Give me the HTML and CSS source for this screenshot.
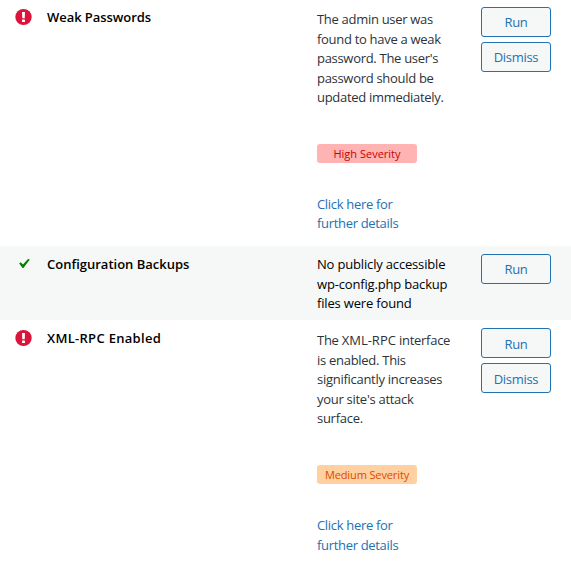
FILE: index.html
```html
<!DOCTYPE html>
<html lang="en">
<head>
<meta charset="utf-8">
<title>Security Checks</title>
<link rel="stylesheet" href="styles.css">
</head>
<body>
<main class="checks">
  <section class="check check-weak">
    <svg class="icon" viewBox="0 0 17 16"><ellipse cx="8.5" cy="8" rx="8.2" ry="8" fill="#dc143c"/><path d="M7 3h3l-.3 6.2H7.3z" fill="#fff"/><rect x="7" y="10.4" width="3" height="2.6" rx=".6" fill="#fff"/></svg>
    <h2 class="title">Weak Passwords</h2>
    <div class="details">
      <p class="text">The admin user was<br>found to have a weak<br>password. The user's<br>password should be<br>updated immediately.</p>
      <div class="badge high">High Severity</div>
      <a class="link">Click here for<br>further details</a>
    </div>
    <div class="actions"><button>Run</button><button>Dismiss</button></div>
  </section>
  <section class="check check-ok">
    <svg class="icon" viewBox="0 0 17 16"><path d="M4.2 8.5 5.7 7.2 8 9.4 13 4 14.8 4.6 8.4 13H7.5z" fill="#008000"/></svg>
    <h2 class="title">Configuration Backups</h2>
    <div class="details">
      <p class="text dark">No publicly accessible<br>wp-config.php backup<br>files were found</p>
    </div>
    <div class="actions"><button>Run</button></div>
  </section>
  <section class="check check-rpc">
    <svg class="icon" viewBox="0 0 17 16"><ellipse cx="8.5" cy="8" rx="8.2" ry="8" fill="#dc143c"/><path d="M7 3h3l-.3 6.2H7.3z" fill="#fff"/><rect x="7" y="10.4" width="3" height="2.6" rx=".6" fill="#fff"/></svg>
    <h2 class="title">XML-RPC Enabled</h2>
    <div class="details">
      <p class="text">The <span class="wide">XML-RPC</span> interface<br>is enabled. This<br>significantly increases<br>your site's attack<br>surface.</p>
      <div class="badge medium">Medium Severity</div>
      <a class="link">Click here for<br>further details</a>
    </div>
    <div class="actions"><button>Run</button><button>Dismiss</button></div>
  </section>
</main>
</body>
</html>
```
FILE: styles.css
```css
body { margin: 0; background: #fff; font-family: "Open Sans", "Noto Sans", sans-serif; font-size: 13px; }
.check { display: grid; grid-template-columns: 32px 270px 164px 70px; padding: 8px 20px 0 15px; box-sizing: border-box; height: 246px; }
.check-ok { height: 74px; background: #f6f7f7; }
.icon { width: 17px; height: 16px; margin-top: 1px; }
.title { margin: 0; font-size: 13px; line-height: 19.5px; font-weight: 600; color: #000; }
.check-weak .title { letter-spacing: -.06px; }
.check-rpc .title { letter-spacing: .3px; }
.check-ok .title, .check-rpc .title { margin-top: 1px; }
.check-rpc .icon { margin-top: 2px; }
.text { margin: 2px 0 0; line-height: 19.5px; letter-spacing: -.3px; color: #2c3338; white-space: nowrap; }
.check-rpc .text { margin-top: 3px; letter-spacing: -.28px; }
.wide { letter-spacing: 0; }
.text.dark { margin-top: 1px; color: #000; letter-spacing: -.17px; }
.badge { width: 100px; height: 19px; margin-top: 36.5px; border-radius: 3px; font-size: 11px; line-height: 20px; text-align: center; white-space: nowrap; }
.high { background: #ffb3b3; color: #cc0000; }
.medium { background: #ffd0a0; color: #dd4a00; letter-spacing: -.12px; }
.link { display: block; margin-top: 31.5px; line-height: 19.5px; letter-spacing: -.32px; color: #2271b1; }
.check-rpc .link { margin-top: 32px; }
.actions { display: flex; flex-direction: column; gap: 5px; }
.check-weak .actions { margin-top: -1px; }
button { width: 70px; height: 30px; flex: none; padding: 0; border: 1px solid #2271b1; border-radius: 3px; background: #f6f7f7; color: #2271b1; font: 13px "Open Sans", "Noto Sans", sans-serif; letter-spacing: -.3px; }
.check-rpc button { padding-top: 1px; }
```
